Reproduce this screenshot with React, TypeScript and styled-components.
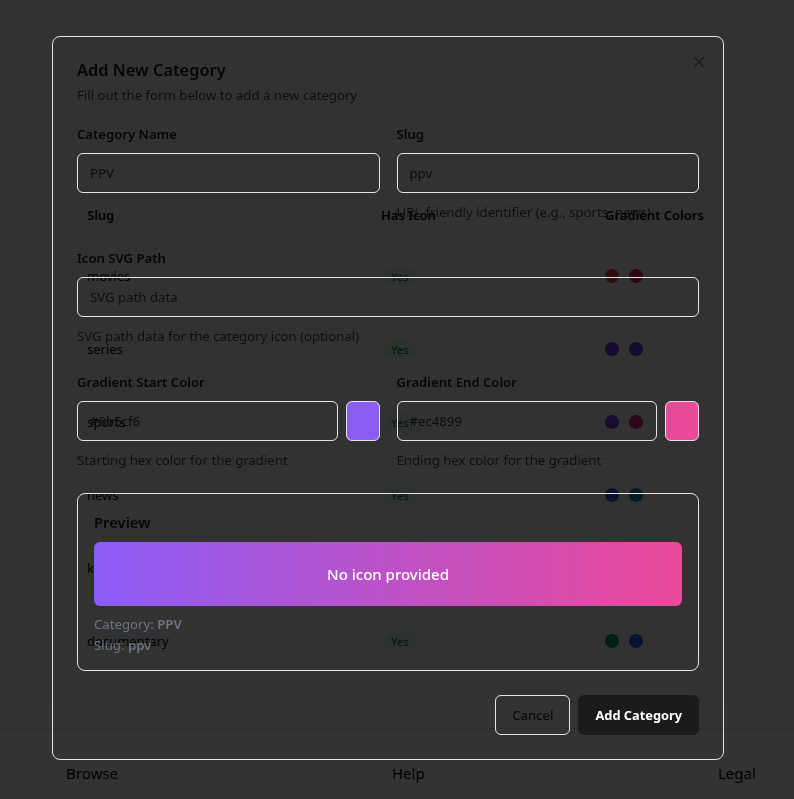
import React from "react";
import styled, { createGlobalStyle } from "styled-components";

const Global = createGlobalStyle`
  html, body { margin: 0; padding: 0; overflow: hidden; }
  body { background: #ffffff; font-family: "Noto Sans", "Open Sans", sans-serif; color: #0a0a0a; }
  * { box-sizing: border-box; }
`;

const Page = styled.div`
  width: 794px;
  height: 799px;
  position: relative;
  overflow: hidden;
`;

const TopStrip = styled.div`
  height: 10px;
  border-bottom: 1px solid #e6e6e6;
  background: #ffffff;
`;

const SubBar = styled.div`
  height: 24px;
  border-bottom: 1px solid #ececec;
  background: #fbfbfb;
`;

const Main = styled.main`
  padding-top: 156px;
  background: #fbfbfb;
`;

const Table = styled.div`
  border-top: 1px solid #ececec;
`;

const Row = styled.div<{ $head?: boolean }>`
  display: grid;
  grid-template-columns: 294px 224px 1fr;
  padding-left: 71px;
  height: ${(p) => (p.$head ? "49px" : "73px")};
  align-items: center;
  border-bottom: 1px solid #ececec;
  font-size: 13px;
  font-weight: ${(p) => (p.$head ? 600 : 400)};
  color: #000;
`;

const Cell = styled.div`
  padding: 0 16px;
  display: flex;
  align-items: center;
  gap: 10px;
`;

const Badge = styled.span`
  display: inline-flex;
  align-items: center;
  height: 18px;
  padding: 0 8px;
  margin-left: 2px;
  border-radius: 9px;
  background: #dcfce7;
  color: #166534;
  font-size: 11.3px;
`;

const Dot = styled.span<{ $c: string }>`
  width: 14px;
  height: 14px;
  border-radius: 50%;
  background: ${(p) => p.$c};
`;

const Pager = styled.div`
  height: 25px;
  border-bottom: 1px solid #ececec;
`;

const Footer = styled.footer`
  margin-top: 25px;
  border-top: 1px solid #e6e6e6;
  background: #ffffff;
  padding: 32px 0 40px 66px;
  display: grid;
  grid-template-columns: repeat(3, 326px);
  font-size: 15px;
  line-height: 24px;
  color: #000;
`;

const Overlay = styled.div`
  position: fixed;
  inset: 0;
  background: rgba(0, 0, 0, 0.8);
  z-index: 10;
`;

const Dialog = styled.div`
  position: fixed;
  left: 52px;
  top: 36px;
  width: 672px;
  z-index: 20;
  border: 1px solid #e5e5e5;
  border-radius: 8px;
  padding: 24px;
  background: transparent;
  color: #0a0a0a;
`;

const Close = styled.button`
  position: absolute;
  top: 16px;
  right: 15px;
  width: 18px;
  height: 18px;
  padding: 0;
  border: 0;
  background: transparent;
  color: #1c1c1c;
  display: flex;
  align-items: center;
  justify-content: center;
`;

const Title = styled.h2`
  margin: 0;
  font-size: 16.4px;
  line-height: 18px;
  font-weight: 600;
  color: #050505;
`;

const Desc = styled.p`
  margin: 6px 0 0;
  font-size: 13.2px;
  line-height: 20px;
  color: #0e0e0e;
`;

const Form = styled.div`
  margin-top: 19px;
  display: flex;
  flex-direction: column;
  gap: 26px;
`;

const Grid2 = styled.div`
  display: grid;
  grid-template-columns: 1fr 1fr;
  gap: 17px;
`;

const Field = styled.div`
  display: flex;
  flex-direction: column;
  gap: 9px;
`;

const Label = styled.label`
  font-size: 13.1px;
  line-height: 20px;
  font-weight: 600;
  color: #050505;
`;

const Input = styled.input`
  height: 40px;
  width: 100%;
  min-width: 0;
  border: 1px solid #e5e5e5;
  border-radius: 6px;
  background: transparent;
  padding: 0 12px;
  font-family: inherit;
  font-size: 13.2px;
  color: #0a0a0a;
  outline: none;
  &::placeholder { color: #0e0e0e; opacity: 1; }
`;

const Help = styled.p`
  margin: 0;
  font-size: 13.2px;
  line-height: 20px;
  color: #0e0e0e;
`;

const ColorRow = styled.div`
  display: flex;
  gap: 8px;
`;

const Swatch = styled.div<{ $c: string }>`
  flex: 0 0 34px;
  height: 40px;
  border-radius: 6px;
  border: 1px solid #e5e5e5;
  background: ${(p) => p.$c};
`;

const PreviewBox = styled.div`
  margin-top: -3px;
  border: 1px solid #e5e5e5;
  border-radius: 8px;
  padding: 16px 16px 15px;
`;

const PreviewTitle = styled.h3`
  margin: 0;
  font-size: 14.8px;
  line-height: 24px;
  font-weight: 600;
  color: #050505;
`;

const Banner = styled.div<{ $from: string; $to: string }>`
  margin-top: 8px;
  height: 64px;
  border-radius: 6px;
  background: linear-gradient(to right, ${(p) => p.$from}, ${(p) => p.$to});
  display: flex;
  align-items: center;
  justify-content: center;
  color: #ffffff;
  font-size: 15px;
  font-weight: 500;
`;

const Meta = styled.p`
  margin: 1px 0 0;
  font-size: 13.2px;
  line-height: 20px;
  color: #6b7280;
  &:first-of-type { margin-top: 8px; }
  b { font-weight: 600; }
`;

const Actions = styled.div`
  margin-top: 24px;
  display: flex;
  justify-content: flex-end;
  gap: 8px;
`;

const Button = styled.button<{ $primary?: boolean }>`
  height: 40px;
  padding: 0 16px;
  border-radius: 6px;
  font-family: inherit;
  font-size: ${(p) => (p.$primary ? "12.8px" : "13px")};
  font-weight: ${(p) => (p.$primary ? 700 : 500)};
  border: 1px solid ${(p) => (p.$primary ? "#1b1b1d" : "#e5e5e5")};
  background: ${(p) => (p.$primary ? "#1b1b1d" : "transparent")};
  color: ${(p) => (p.$primary ? "#ffffff" : "#0a0a0a")};
`;

const rows = [
  { slug: "movies", c: ["#ef4444", "#db2777"] },
  { slug: "series", c: ["#7c3aed", "#4f46e5"] },
  { slug: "sports", c: ["#7c3aed", "#db2777"] },
  { slug: "news", c: ["#2563eb", "#0891b2"] },
  { slug: "kids", c: ["#f59e0b", "#ef4444"] },
  { slug: "documentary", c: ["#059669", "#2563eb"] },
];

export default function App() {
  return (
    <>
      <Global />
      <Page>
        <TopStrip />
        <SubBar />
        <Main>
          <Table>
            <Row $head>
              <Cell>Slug</Cell>
              <Cell>Has Icon</Cell>
              <Cell>Gradient Colors</Cell>
            </Row>
            {rows.map((r) => (
              <Row key={r.slug}>
                <Cell>{r.slug}</Cell>
                <Cell>
                  <Badge>Yes</Badge>
                </Cell>
                <Cell>
                  <Dot $c={r.c[0]} />
                  <Dot $c={r.c[1]} />
                </Cell>
              </Row>
            ))}
          </Table>
          <Pager />
        </Main>
        <Footer>
          <span>Browse</span>
          <span>Help</span>
          <span>Legal</span>
        </Footer>
      </Page>
      <Overlay />
      <Dialog role="dialog">
        <Close aria-label="Close">
          <svg width="18" height="18" viewBox="0 0 24 24" fill="none" stroke="currentColor" strokeWidth="2" strokeLinecap="round" strokeLinejoin="round">
            <path d="M18 6 6 18" />
            <path d="m6 6 12 12" />
          </svg>
        </Close>
        <Title>Add New Category</Title>
        <Desc>Fill out the form below to add a new category</Desc>
        <Form>
          <Grid2>
            <Field>
              <Label>Category Name</Label>
              <Input defaultValue="PPV" />
            </Field>
            <Field>
              <Label>Slug</Label>
              <Input defaultValue="ppv" />
              <Help>URL-friendly identifier (e.g., sports, news)</Help>
            </Field>
          </Grid2>
          <Field>
            <Label>Icon SVG Path</Label>
            <Input placeholder="SVG path data" />
            <Help>SVG path data for the category icon (optional)</Help>
          </Field>
          <Grid2>
            <Field>
              <Label>Gradient Start Color</Label>
              <ColorRow>
                <Input defaultValue="#8b5cf6" />
                <Swatch $c="#8b5cf6" />
              </ColorRow>
              <Help>Starting hex color for the gradient</Help>
            </Field>
            <Field>
              <Label>Gradient End Color</Label>
              <ColorRow>
                <Input defaultValue="#ec4899" />
                <Swatch $c="#ec4899" />
              </ColorRow>
              <Help>Ending hex color for the gradient</Help>
            </Field>
          </Grid2>
          <PreviewBox>
            <PreviewTitle>Preview</PreviewTitle>
            <Banner $from="#8b5cf6" $to="#ec4899">No icon provided</Banner>
            <Meta>
              Category: <b>PPV</b>
            </Meta>
            <Meta>
              Slug: <b>ppv</b>
            </Meta>
          </PreviewBox>
        </Form>
        <Actions>
          <Button>Cancel</Button>
          <Button $primary>Add Category</Button>
        </Actions>
      </Dialog>
    </>
  );
}
